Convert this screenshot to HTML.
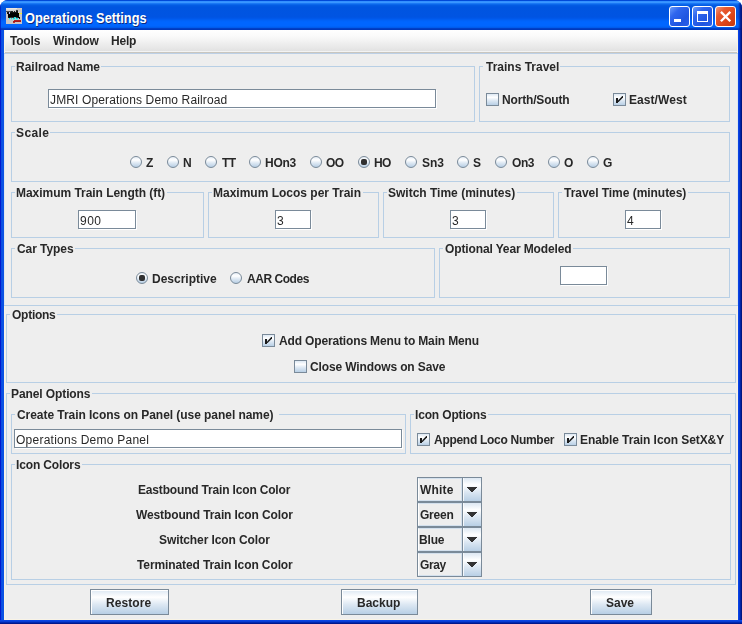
<!DOCTYPE html>
<html><head><meta charset="utf-8"><title>Operations Settings</title>
<style>
html,body{margin:0;padding:0;}
body{width:742px;height:624px;overflow:hidden;position:relative;background:#fff;font-family:"Liberation Sans",sans-serif;font-size:12px;color:#282828;}
div,span{box-sizing:border-box;}
.a{position:absolute;}
#frame{left:0;top:0;width:742px;height:624px;border-radius:8px 8px 0 0;background:#0a47dc;overflow:hidden;}
#fl{left:0;top:30px;width:4px;height:594px;background:linear-gradient(to right,#0019cf 0,#0019cf 1px,#0a4ae0 1px,#0a55e6 3px,#0a50e0 4px);}
#fr{left:738px;top:30px;width:4px;height:594px;background:linear-gradient(to right,#0a46e6 0,#0a40e0 1px,#0034d0 1.6px,#0022a0 2.6px,#001580 3.4px,#001278 4px);}
#fb{left:0;top:620px;width:742px;height:4px;background:linear-gradient(to bottom,#0a4ae6 0,#0a42de 1.2px,#0030c0 2.2px,#001c98 3px,#001280 4px);}
#titlebar{left:0;top:0;width:742px;height:30px;background:linear-gradient(to bottom,#0149d8 0px,#0149d8 1px,#2f8dff 1px,#3a96ff 2.5px,#1a78f5 3.5px,#0a66ea 4.5px,#035be3 5.5px,#0055e0 7px,#0054e2 17px,#0058ea 18.5px,#0062f8 20.5px,#0066ff 22px,#0066ff 26px,#005cec 27.5px,#0040c8 28.5px,#0035b5 30px);}
#title{left:25px;top:10px;color:#fff;font-weight:bold;white-space:nowrap;text-shadow:1px 1px 0 #0a2a80;}
#content{left:4px;top:30px;width:734px;height:590px;background:#eeeeee;}
#menubar{left:4px;top:30px;width:734px;height:21px;background:linear-gradient(to bottom,#ffffff 0%,#fafafa 30%,#eeeeee 65%,#e2e2e2 100%);}
.hl{height:1px;}
.g{position:absolute;border:1px solid #b8cfe5;}
.t{position:absolute;will-change:transform;white-space:nowrap;line-height:14px;height:14px;color:#282828;}
.gt{background:#eeeeee;}
.tf{position:absolute;background:#fff;border:1px solid #7a8a99;box-shadow:1px 1px 0 #fff;}
.cb{position:absolute;width:13px;height:13px;border:1px solid #7a8a99;background:linear-gradient(to bottom,#dde8f3 0%,#ffffff 30%,#dde8f3 60%,#b8cfe5 100%);}
.rb{position:absolute;width:12px;height:12px;border:1px solid #7a8a99;border-radius:50%;background:linear-gradient(to bottom,#e8eff7 0%,#ffffff 30%,#dde8f3 60%,#b8cfe5 100%);}
.rb i{position:absolute;left:2px;top:2px;width:6px;height:6px;border-radius:2px;background:#303030;}
.btn{position:absolute;border:1px solid #7a8a99;height:26px;background:linear-gradient(to bottom,#dde8f3 0%,#ffffff 30%,#dde8f3 60%,#b8cfe5 100%);box-shadow:inset 1px 1px 0 #fff;}
.combo{position:absolute;border:1px solid #7a8a99;height:25px;width:65px;background:linear-gradient(to bottom,#dde8f3 0%,#ffffff 30%,#dde8f3 60%,#b8cfe5 100%);}
.combo .lab{position:absolute;left:0;top:0;width:44px;height:23px;background:#eeeeee;border:1px solid #d3e0ed;border-left-color:#fff;}
.combo .sep{position:absolute;left:44px;top:0;width:1px;height:23px;background:#7a8a99;}
.combo .hl2{position:absolute;left:45px;top:0;width:1px;height:23px;background:rgba(255,255,255,.8);}
.combo svg{position:absolute;left:49px;top:9px;}
.cap{position:absolute;top:6px;width:21px;height:21px;border:1px solid #fff;border-radius:3px;}
.capb{background:linear-gradient(135deg,#6a9bfa 0%,#2f66ee 30%,#2055e0 70%,#2a60ea 100%);}
.capr{background:linear-gradient(135deg,#f39a7c 0%,#e85a30 28%,#dc4518 65%,#c43a10 100%);}
</style></head><body>
<div id="frame" class="a">
<div id="titlebar" class="a"></div>
<div class="a" style="left:738px;top:3px;width:4px;height:27px;background:linear-gradient(to right,rgba(0,30,160,0) 0,rgba(0,30,160,.35) 1px,rgba(0,20,130,.8) 2.5px,rgba(0,16,110,.95) 4px)"></div><div class="a" style="left:0;top:3px;width:1px;height:27px;background:rgba(0,20,190,.7)"></div><div id="fl" class="a"></div><div id="fr" class="a"></div><div id="fb" class="a"></div>
<div id="content" class="a"></div>
<div id="menubar" class="a"></div>
<div class="a hl" style="left:4px;top:51px;width:734px;background:#f3f3f3"></div>
<div class="a hl" style="left:4px;top:52px;width:734px;background:#c9c6bf"></div>
<div class="a hl" style="left:4px;top:53px;width:734px;background:#bdd0e6"></div>
<div class="a" style="left:4px;top:30px;width:1px;height:23px;background:#f8f3e6"></div>
<div class="a" style="left:737px;top:30px;width:1px;height:23px;background:#f8f3e6"></div>
<div class="a" style="left:4px;top:54px;width:1px;height:251px;background:#dde6ef"></div>
<div class="a" style="left:737px;top:54px;width:1px;height:251px;background:#dde6ef"></div>
<div class="a" style="left:4px;top:306px;width:1px;height:314px;background:#f8f3e6"></div>
<div class="a" style="left:737px;top:306px;width:1px;height:314px;background:#f8f3e6"></div>
<div class="a hl" style="left:4px;top:305px;width:734px;background:#b8cfe5"></div>
<div class="a hl" style="left:4px;top:619px;width:734px;background:#f8f3e6"></div>

<svg class="a" style="left:6px;top:8px" width="16" height="16" viewBox="0 0 16 16" shape-rendering="crispEdges"><rect x="0" y="0" width="16" height="16" fill="#c9c5c5"/><rect x="0" y="0" width="11" height="1" fill="#ece6de"/><rect x="0" y="1" width="10" height="1" fill="#dcdcdc"/><rect x="0" y="2" width="9" height="1" fill="#cfcfcf"/><rect x="11" y="0" width="5" height="1" fill="#d4ccc8"/><rect x="10" y="2" width="2" height="1" fill="#3a3a3a"/><rect x="0" y="3" width="5" height="1" fill="#4a4a4a"/><rect x="5" y="3" width="2" height="1" fill="#222"/><rect x="8" y="3" width="1" height="1" fill="#222"/><rect x="10" y="3" width="2" height="1" fill="#111"/><rect x="1" y="4" width="2" height="2" fill="#111"/><rect x="3" y="4" width="1" height="2" fill="#b4b8ff"/><rect x="4" y="4" width="8" height="1" fill="#111"/><rect x="4" y="5" width="9" height="1" fill="#000"/><rect x="13" y="5" width="3" height="1" fill="#f0ee30"/><rect x="2" y="6" width="11" height="3" fill="#000"/><rect x="2" y="9" width="2" height="1" fill="#111"/><rect x="4" y="9" width="4" height="1" fill="#333"/><rect x="8" y="9" width="2" height="1" fill="#30d8d8"/><rect x="10" y="9" width="2" height="1" fill="#333"/><rect x="12" y="9" width="2" height="1" fill="#000"/><rect x="3" y="10" width="1" height="1" fill="#10e0e0"/><rect x="3" y="11" width="1" height="1" fill="#70e8e8"/><rect x="5" y="10" width="1" height="1" fill="#10e0e0"/><rect x="5" y="11" width="1" height="1" fill="#70e8e8"/><rect x="7" y="10" width="2" height="1" fill="#10e0e0"/><rect x="7" y="11" width="2" height="1" fill="#70e8e8"/><rect x="10" y="10" width="2" height="1" fill="#10e0e0"/><rect x="10" y="11" width="2" height="1" fill="#70e8e8"/><rect x="13" y="10" width="1" height="1" fill="#111"/><rect x="8" y="12" width="7" height="1" fill="#b02020"/><rect x="7" y="13" width="8" height="1" fill="#a81818"/><rect x="7" y="14" width="2" height="1" fill="#b83030"/></svg>
<div id="title" class="a" style="font-size:14px;line-height:16px;transform-origin:0 0;transform:scaleX(0.914)">Operations Settings</div>
<div class="cap capb" style="left:669px"><div class="a" style="left:4px;top:12px;width:7px;height:3px;background:#fff"></div></div>
<div class="cap capb" style="left:692px"><div class="a" style="left:4px;top:4px;width:11px;height:11px;border:1px solid #fff;border-top-width:3px"></div></div>
<div class="cap capr" style="left:715px"><svg class="a" style="left:0;top:0" width="19" height="19" viewBox="0 0 19 19"><path d="M4.9 4.9 L14.3 14.3 M14.3 4.9 L4.9 14.3" stroke="#fff" stroke-width="2.3" fill="none"/></svg></div>
<div class="t " style="left:10px;top:34px;font-weight:bold;letter-spacing:-0.202px;">Tools</div>
<div class="t " style="left:53px;top:34px;font-weight:bold;">Window</div>
<div class="t " style="left:111px;top:34px;font-weight:bold;letter-spacing:-0.21px;">Help</div>
<div class="g" style="left:11px;top:66px;width:464px;height:56px"></div>
<div class="g" style="left:479px;top:66px;width:251px;height:56px"></div>
<div class="g" style="left:11px;top:132px;width:719px;height:50px"></div>
<div class="g" style="left:11px;top:192px;width:193px;height:46px"></div>
<div class="g" style="left:208px;top:192px;width:171px;height:46px"></div>
<div class="g" style="left:383px;top:192px;width:171px;height:46px"></div>
<div class="g" style="left:558px;top:192px;width:172px;height:46px"></div>
<div class="g" style="left:11px;top:248px;width:424px;height:50px"></div>
<div class="g" style="left:439px;top:248px;width:291px;height:50px"></div>
<div class="g" style="left:6px;top:314px;width:730px;height:69px"></div>
<div class="g" style="left:6px;top:393px;width:730px;height:192px"></div>
<div class="g" style="left:11px;top:414px;width:395px;height:40px"></div>
<div class="g" style="left:410px;top:414px;width:321px;height:40px"></div>
<div class="g" style="left:11px;top:464px;width:720px;height:116px"></div>
<div class="a gt" style="left:15px;top:66px;width:86px;height:1px"></div>
<div class="t " style="left:16px;top:60px;font-weight:bold;">Railroad Name</div>
<div class="a gt" style="left:483px;top:66px;width:77px;height:1px"></div>
<div class="t " style="left:486px;top:60px;font-weight:bold;">Trains Travel</div>
<div class="a gt" style="left:15px;top:132px;width:35px;height:1px"></div>
<div class="t " style="left:16px;top:126px;font-weight:bold;letter-spacing:0.382px;">Scale</div>
<div class="a gt" style="left:15px;top:192px;width:152px;height:1px"></div>
<div class="t " style="left:16px;top:186px;font-weight:bold;letter-spacing:-0.038px;">Maximum Train Length (ft)</div>
<div class="a gt" style="left:212px;top:192px;width:151px;height:1px"></div>
<div class="t " style="left:213px;top:186px;font-weight:bold;">Maximum Locos per Train</div>
<div class="a gt" style="left:387px;top:192px;width:130px;height:1px"></div>
<div class="t " style="left:388px;top:186px;font-weight:bold;">Switch Time (minutes)</div>
<div class="a gt" style="left:562px;top:192px;width:126px;height:1px"></div>
<div class="t " style="left:564px;top:186px;font-weight:bold;letter-spacing:-0.04px;">Travel Time (minutes)</div>
<div class="a gt" style="left:15px;top:248px;width:60px;height:1px"></div>
<div class="t " style="left:17px;top:242px;font-weight:bold;letter-spacing:-0.067px;">Car Types</div>
<div class="a gt" style="left:443px;top:248px;width:130px;height:1px"></div>
<div class="t " style="left:445px;top:242px;font-weight:bold;letter-spacing:-0.126px;">Optional Year Modeled</div>
<div class="a gt" style="left:10px;top:314px;width:47px;height:1px"></div>
<div class="t " style="left:12px;top:308px;font-weight:bold;letter-spacing:-0.255px;">Options</div>
<div class="a gt" style="left:10px;top:393px;width:82px;height:1px"></div>
<div class="t " style="left:11px;top:387px;font-weight:bold;letter-spacing:-0.097px;">Panel Options</div>
<div class="a gt" style="left:15px;top:414px;width:264px;height:1px"></div>
<div class="t " style="left:17px;top:408px;font-weight:bold;letter-spacing:-0.05px;">Create Train Icons on Panel (use panel name)</div>
<div class="a gt" style="left:414px;top:414px;width:74px;height:1px"></div>
<div class="t " style="left:415px;top:408px;font-weight:bold;letter-spacing:-0.155px;">Icon Options</div>
<div class="a gt" style="left:15px;top:464px;width:67px;height:1px"></div>
<div class="t " style="left:16px;top:458px;font-weight:bold;letter-spacing:-0.144px;">Icon Colors</div>
<div class="tf" style="left:48px;top:89px;width:388px;height:19px"></div>
<div class="t " style="left:50px;top:93px;letter-spacing:0.138px;">JMRI Operations Demo Railroad</div>
<div class="tf" style="left:78px;top:210px;width:58px;height:19px"></div>
<div class="t " style="left:80px;top:214px;letter-spacing:0.495px;">900</div>
<div class="tf" style="left:275px;top:210px;width:36px;height:19px"></div>
<div class="t " style="left:277px;top:214px;">3</div>
<div class="tf" style="left:450px;top:210px;width:36px;height:19px"></div>
<div class="t " style="left:452px;top:214px;">3</div>
<div class="tf" style="left:625px;top:210px;width:36px;height:19px"></div>
<div class="t " style="left:627px;top:214px;">4</div>
<div class="tf" style="left:560px;top:266px;width:47px;height:19px"></div>
<div class="tf" style="left:14px;top:429px;width:388px;height:19px"></div>
<div class="t " style="left:16px;top:433px;letter-spacing:0.243px;">Operations Demo Panel</div>
<div class="cb" style="left:486px;top:93px"></div>
<div class="t " style="left:502px;top:93px;font-weight:bold;letter-spacing:-0.171px;">North/South</div>
<div class="cb" style="left:613px;top:93px"><svg class="a" style="left:0;top:0" width="11" height="11" viewBox="1 1 11 11" shape-rendering="crispEdges"><rect x="3" y="5" width="2" height="5" fill="#1a1a1a"/><path d="M5 7.4 L9.3 3.1 L10 3.1 L10 4.6 L5.6 9 L5 9 Z" fill="#1a1a1a" shape-rendering="geometricPrecision"/></svg></div>
<div class="t " style="left:629px;top:93px;font-weight:bold;letter-spacing:0.068px;">East/West</div>
<div class="cb" style="left:262px;top:334px"><svg class="a" style="left:0;top:0" width="11" height="11" viewBox="1 1 11 11" shape-rendering="crispEdges"><rect x="3" y="5" width="2" height="5" fill="#1a1a1a"/><path d="M5 7.4 L9.3 3.1 L10 3.1 L10 4.6 L5.6 9 L5 9 Z" fill="#1a1a1a" shape-rendering="geometricPrecision"/></svg></div>
<div class="t " style="left:279px;top:334px;font-weight:bold;letter-spacing:-0.148px;">Add Operations Menu to Main Menu</div>
<div class="cb" style="left:294px;top:360px"></div>
<div class="t " style="left:310px;top:360px;font-weight:bold;letter-spacing:-0.126px;">Close Windows on Save</div>
<div class="cb" style="left:417px;top:433px"><svg class="a" style="left:0;top:0" width="11" height="11" viewBox="1 1 11 11" shape-rendering="crispEdges"><rect x="3" y="5" width="2" height="5" fill="#1a1a1a"/><path d="M5 7.4 L9.3 3.1 L10 3.1 L10 4.6 L5.6 9 L5 9 Z" fill="#1a1a1a" shape-rendering="geometricPrecision"/></svg></div>
<div class="t " style="left:434px;top:433px;font-weight:bold;letter-spacing:-0.286px;">Append Loco Number</div>
<div class="cb" style="left:564px;top:433px"><svg class="a" style="left:0;top:0" width="11" height="11" viewBox="1 1 11 11" shape-rendering="crispEdges"><rect x="3" y="5" width="2" height="5" fill="#1a1a1a"/><path d="M5 7.4 L9.3 3.1 L10 3.1 L10 4.6 L5.6 9 L5 9 Z" fill="#1a1a1a" shape-rendering="geometricPrecision"/></svg></div>
<div class="t " style="left:580px;top:433px;font-weight:bold;letter-spacing:-0.082px;">Enable Train Icon SetX&amp;Y</div>
<div class="rb" style="left:130px;top:156px"></div>
<div class="t " style="left:146px;top:156px;font-weight:bold;">Z</div>
<div class="rb" style="left:167px;top:156px"></div>
<div class="t " style="left:183px;top:156px;font-weight:bold;">N</div>
<div class="rb" style="left:205px;top:156px"></div>
<div class="t " style="left:222px;top:156px;font-weight:bold;letter-spacing:-0.6px;">TT</div>
<div class="rb" style="left:249px;top:156px"></div>
<div class="t " style="left:265px;top:156px;font-weight:bold;letter-spacing:-0.27px;">HOn3</div>
<div class="rb" style="left:310px;top:156px"></div>
<div class="t " style="left:326px;top:156px;font-weight:bold;letter-spacing:-0.6px;">OO</div>
<div class="rb" style="left:358px;top:156px"><i></i></div>
<div class="t " style="left:374px;top:156px;font-weight:bold;letter-spacing:-0.6px;">HO</div>
<div class="rb" style="left:405px;top:156px"></div>
<div class="t " style="left:422px;top:156px;font-weight:bold;">Sn3</div>
<div class="rb" style="left:457px;top:156px"></div>
<div class="t " style="left:473px;top:156px;font-weight:bold;">S</div>
<div class="rb" style="left:495px;top:156px"></div>
<div class="t " style="left:512px;top:156px;font-weight:bold;letter-spacing:-0.405px;">On3</div>
<div class="rb" style="left:548px;top:156px"></div>
<div class="t " style="left:564px;top:156px;font-weight:bold;">O</div>
<div class="rb" style="left:587px;top:156px"></div>
<div class="t " style="left:603px;top:156px;font-weight:bold;">G</div>
<div class="rb" style="left:136px;top:272px"><i></i></div>
<div class="t " style="left:152px;top:272px;font-weight:bold;">Descriptive</div>
<div class="rb" style="left:230px;top:272px"></div>
<div class="t " style="left:247px;top:272px;font-weight:bold;letter-spacing:-0.461px;">AAR Codes</div>
<div class="t " style="left:138px;top:483px;font-weight:bold;letter-spacing:-0.173px;">Eastbound Train Icon Color</div>
<div class="t " style="left:136px;top:508px;font-weight:bold;letter-spacing:-0.119px;">Westbound Train Icon Color</div>
<div class="t " style="left:159px;top:533px;font-weight:bold;letter-spacing:-0.095px;">Switcher Icon Color</div>
<div class="t " style="left:137px;top:558px;font-weight:bold;letter-spacing:-0.104px;">Terminated Train Icon Color</div>
<div class="combo" style="left:417px;top:477px"><div class="lab"></div><div class="sep"></div><div class="hl2"></div><svg width="10" height="5" viewBox="0 0 10 5" shape-rendering="crispEdges"><path d="M0 0 H10 V1 H9 V2 H8 V3 H7 V4 H6 V5 H4 V4 H3 V3 H2 V2 H1 V1 H0 Z" fill="#333"/></svg></div>
<div class="t " style="left:420px;top:483px;font-weight:bold;letter-spacing:0.203px;">White</div>
<div class="combo" style="left:417px;top:502px"><div class="lab"></div><div class="sep"></div><div class="hl2"></div><svg width="10" height="5" viewBox="0 0 10 5" shape-rendering="crispEdges"><path d="M0 0 H10 V1 H9 V2 H8 V3 H7 V4 H6 V5 H4 V4 H3 V3 H2 V2 H1 V1 H0 Z" fill="#333"/></svg></div>
<div class="t " style="left:420px;top:508px;font-weight:bold;letter-spacing:-0.225px;">Green</div>
<div class="combo" style="left:417px;top:527px"><div class="lab"></div><div class="sep"></div><div class="hl2"></div><svg width="10" height="5" viewBox="0 0 10 5" shape-rendering="crispEdges"><path d="M0 0 H10 V1 H9 V2 H8 V3 H7 V4 H6 V5 H4 V4 H3 V3 H2 V2 H1 V1 H0 Z" fill="#333"/></svg></div>
<div class="t " style="left:419px;top:533px;font-weight:bold;letter-spacing:-0.18px;">Blue</div>
<div class="combo" style="left:417px;top:552px"><div class="lab"></div><div class="sep"></div><div class="hl2"></div><svg width="10" height="5" viewBox="0 0 10 5" shape-rendering="crispEdges"><path d="M0 0 H10 V1 H9 V2 H8 V3 H7 V4 H6 V5 H4 V4 H3 V3 H2 V2 H1 V1 H0 Z" fill="#333"/></svg></div>
<div class="t " style="left:420px;top:558px;font-weight:bold;letter-spacing:-0.42px;">Gray</div>
<div class="btn" style="left:90px;top:589px;width:79px"></div>
<div class="t " style="left:106px;top:596px;font-weight:bold;letter-spacing:0.09px;">Restore</div>
<div class="btn" style="left:341px;top:589px;width:77px"></div>
<div class="t " style="left:357px;top:596px;font-weight:bold;">Backup</div>
<div class="btn" style="left:590px;top:589px;width:62px"></div>
<div class="t " style="left:606px;top:596px;font-weight:bold;">Save</div>
</div></body></html>
